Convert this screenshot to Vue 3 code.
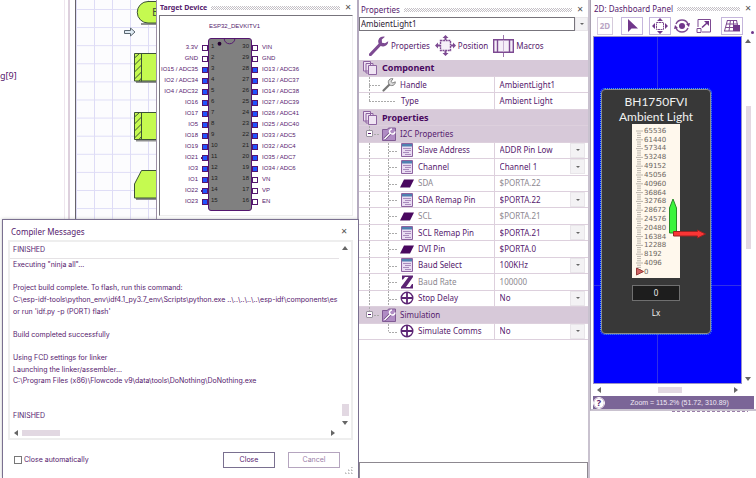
<template>
  <main class="desktop">
    <div class="left-half">
      <section class="explorer">
        <span class="variable">g[9]</span>
      </section>

      <section class="flowchart">
        <svg class="sheet" aria-hidden="true">
          <defs>
            <pattern id="grid" x="18" y="9" width="18" height="18.1" patternUnits="userSpaceOnUse">
              <path d="M0 .5H18M.5 0V18.1" stroke="#dedcf6" fill="none" />
            </pattern>
          </defs>
          <rect width="100%" height="100%" fill="url(#grid)" />
          <g stroke="#8f9090" stroke-width="2" fill="none">
            <path d="M65 24h25M60 82h25M60 140.500h25M60 199h25" />
          </g>
          <g fill="#c5fa50" stroke="#3d5238">
            <path d="M90 1.500H72a10.500 10.500 0 0 0 0 21.500H90z" />
            <path d="M58.500 53.500H90v27.500H58.500zM65.500 53.500v28M58.500 58l5-4.500M58.500 65l7-7M58.500 72l7-7M58.500 79l7-7M63 81l2.500-3" />
            <path d="M58.500 112.500H90v27H58.500zM65.500 112.500v27M58.500 117l5-4.500M58.500 124l7-7M58.500 131l7-7M58.500 138l7-7M63 139.500l2.500-3" />
            <path d="M65.500 170.500H90V198H58.500V184z" />
          </g>
          <path d="M48.500 30.500h6v-2.500l4.500 4-4.500 4v-2.500h-6z" fill="#dfeaf3" stroke="#5a6670" />
          <text x="76" y="16" class="begin">B</text>
        </svg>
      </section>

      <section class="window target">
        <header class="title-bar bold">
          <h2>Target Device</h2><i class="dots"></i>
          <button class="close" aria-label="Close Target Device">✕</button>
        </header>
        <div class="target-view">
          <p class="chip-name">ESP32_DEVKITV1</p>
          <div class="chip">
            <ul class="pins left">
              <li v-for="(pin, i) in leftPins" :key="pin">
                <span>{{ pin }}</span>
                <i class="pad" :class="{ used: i > 1, remapped: i === 10 || i === 13 }"></i>
              </li>
            </ul>
            <div class="chip-body">
              <svg class="notch" viewBox="0 0 44 9"><path d="M16 0a5.500 5 0 0 0 11 0" fill="none" stroke="#54166f" /><circle cx="11" cy="5" r="2" fill="#240030" /></svg>
              <div v-for="n in 15" :key="n" class="numbers"><span>{{ n }}</span><span>{{ 31 - n }}</span></div>
            </div>
            <ul class="pins">
              <li v-for="(pin, i) in rightPins" :key="pin">
                <i class="pad" :class="{ used: i > 1 && i < 12 }"></i>
                <span>{{ pin }}</span>
              </li>
            </ul>
          </div>
        </div>
      </section>

      <section class="dialog">
        <header>
          <h2>Compiler Messages</h2>
          <button class="close" aria-label="Close Compiler Messages">✕</button>
        </header>
        <div class="messages">
          <div class="log-side">
            <p class="status">FINISHED</p>
            <div class="log"><p v-for="(line, i) in log" :key="i">{{ line }}</p></div>
          </div>
          <div class="scroll-v">
            <i class="tri up"></i><i class="track"></i><i class="thumb"></i><i class="tri down"></i>
          </div>
          <div class="scroll-h">
            <i class="tri lft"></i><i class="thumb"></i><i class="track"></i><i class="tri rgt"></i>
          </div>
        </div>
        <footer>
          <label><input v-model="closeAuto" type="checkbox" />Close automatically</label>
          <button class="btn">Close</button>
          <button class="btn" disabled>Cancel</button>
        </footer>
        <svg class="grip" viewBox="0 0 8 8"><path d="M6 0h1v1M3 3h1v1M6 3h1v1M0 6h1v1M3 6h1v1M6 6h1v1" fill="none" stroke="#aaa" /></svg>
      </section>
    </div>

    <section class="window properties">
      <header class="title-bar">
        <h2>Properties</h2><i class="dots"></i>
        <button class="close" aria-label="Close Properties">✕</button>
      </header>
      <div class="combo">
        <select v-model="component" aria-label="Component"><option>AmbientLight1</option></select>
        <span class="drop"><i></i></span>
      </div>
      <nav class="tabs">
        <button>
          <svg width="20" height="20" viewBox="0 0 20 20"><path d="M1.500 18.500 11 8.500" stroke="#7d4a92" stroke-width="3.200" stroke-linecap="round" /><path d="M16 .8a5 5 0 1 0 3.200 4.400L16 7.200 13 6.800 12.800 3.500z" fill="#7d4a92" /></svg>
          Properties
        </button>
        <button>
          <svg width="21" height="21" viewBox="0 0 21 21"><path d="M5.500 5.500h10v10h-10z" fill="#f5eff8" stroke="#7d4a92" stroke-width="1.400" stroke-dasharray="2 .6" /><path d="M10.500 0l3 3h-2v2h-2V3h-2zM10.500 21l3-3h-2v-2h-2v2h-2zM0 10.500l3-3v2h2v2H3v2zM21 10.500l-3-3v2h-2v2h2v2z" fill="#7d4a92" /></svg>
          Position
        </button>
        <button>
          <svg width="21" height="22" viewBox="0 0 21 22"><path d="M10.500 0v22" stroke="#9a75aa" /><path d="M.7 4.700h19.600v12.600H.7z" fill="#f5eff8" stroke="#7d4a92" stroke-width="1.400" /><path d="M4.500 4.500v13M16.500 4.500v13" stroke="#7d4a92" stroke-width="1.400" /><path d="M10.500 5.500v11" stroke="#c9b3d3" /></svg>
          Macros
        </button>
      </nav>
      <table>
        <colgroup><col class="name-col" /><col /></colgroup>
        <tbody>
          <tr v-for="row in rows" :key="row.name + row.kind" :class="[row.kind, { muted: row.muted }]">
            <td class="name" :colspan="row.value ? 1 : 2">
              <div class="cell">
                <i v-if="row.kind === 'group'" class="toggle"></i>
                <svg v-if="row.icon" class="icon" viewBox="0 0 14 14">
                  <g v-if="row.icon === 'pages'" fill="#efe4f3" stroke="#8d63a0">
                    <path d="M.5.500h7v9.500h-7zM3 2.500h7v9.500h-7z" /><path d="M5.500 4.500h8v9h-8z" />
                  </g>
                  <g v-else-if="row.icon === 'wrench'">
                    <path d="M1.500 12.500 8 6" stroke="#777" stroke-width="2.200" stroke-linecap="round" /><path d="M11 .8a3.500 3.500 0 1 0 2.300 3L10.800 5 9 3.500z" fill="#ddd" stroke="#777" stroke-width=".9" />
                  </g>
                  <g v-else-if="row.icon === 'folder'">
                    <path d="M.5 2.500h5l1-1.500h7v12.500H.5z" fill="#b08cc4" stroke="#815b95" /><path d="M2.500 12 9 5.500" stroke="#6a4580" stroke-width="2.800" /><path d="M2.500 12 9 5.500M8 6a2.500 2.500 0 0 1 2-4M9 6.500a2.500 2.500 0 0 0 4-2" stroke="#fff" stroke-width="1.500" fill="none" />
                  </g>
                  <g v-else-if="row.icon === 'list'">
                    <path d="M1.500.500h11v13h-11z" fill="#e9dcf2" stroke="#8d63a0" /><path d="M2 1h10v2.500H2z" fill="#4f80b0" /><path d="M3 5.500h8M5 7.500h6M3 9.500h6M5 11.500h6" stroke="#a98bbd" />
                  </g>
                  <path v-else-if="row.icon === 'pin'" d="M4 3.500h10L10 11.500H0z" fill="#49085f" />
                  <path v-else-if="row.icon === 'z'" d="M2 .5h11v1.500L6 12h4l2-3h1v4.500H1V12L8.500 2H5L3 4.500H2z" fill="#5c2474" />
                  <g v-else fill="none" stroke="#5c2474">
                    <circle cx="7" cy="7" r="5.800" stroke-width="1.400" /><path d="M7 1v12M1 7h12" stroke-width="1.800" />
                  </g>
                </svg>
                <span>{{ row.name }}</span>
              </div>
            </td>
            <td v-if="row.value" class="value">
              <div v-if="row.drop" class="choice">
                <select :aria-label="row.name"><option>{{ row.value }}</option></select>
                <span class="drop"><i></i></span>
              </div>
              <span v-else>{{ row.value }}</span>
            </td>
          </tr>
        </tbody>
      </table>
      <div class="help-box"></div>
    </section>

    <div class="right-column">
      <section class="window dashboard">
        <header class="title-bar">
          <h2>2D: Dashboard Panel</h2><i class="dots"></i>
          <button class="close" aria-label="Close Dashboard Panel">✕</button>
        </header>
        <nav class="tools">
          <button class="two-d">2D</button>
          <button class="on gap" aria-label="Select"><svg viewBox="0 0 16 16"><path d="M4 1v13l3.500-3.500H14z" fill="#70368a" /></svg></button>
          <button class="on" aria-label="Move"><svg viewBox="0 0 16 16"><path d="M4.500 4.500h7v7h-7z" fill="none" stroke="#7d4a92" stroke-dasharray="2 .5" /><path d="M8 0l3 3H5zM8 16l3-3H5zM0 8l3-3v6zM16 8l-3-3v6z" fill="#70368a" /></svg></button>
          <button aria-label="Rotate"><svg viewBox="0 0 16 16"><circle cx="8" cy="8" r="3" fill="#70368a" /><path d="M2 6a6.500 6.500 0 0 1 12 0M14 10a6.500 6.500 0 0 1-12 0" fill="none" stroke="#7d4a92" stroke-width="1.400" /><path d="M16 5l-1 4-3-3zM0 11l1-4 3 3z" fill="#70368a" /></svg></button>
          <button class="gap" aria-label="Scale"><svg viewBox="0 0 16 16"><path d="M2 9V1.500h12.500V14H6" fill="none" stroke="#7d4a92" /><path d="M1 10.500h4v4H1z" fill="#fff" stroke="#7d4a92" /><path d="M6 9.500 11 5" stroke="#70368a" stroke-width="1.500" /><path d="M8 3h5v5z" fill="#70368a" /></svg></button>
          <button class="on" aria-label="Grid"><svg viewBox="0 0 16 16"><path d="M3 2.500h10M2 6h12M1 9.500h14M0 13h16M3.500 2 .5 13M6.500 2 5 13M9.500 2v11M12.500 2l2 11" fill="none" stroke="#7d4a92" /><path d="M9 7h7v6H9z" fill="#70368a" /></svg></button>
          <button class="more" aria-label="More tools"></button>
        </nav>
        <div class="view">
          <div class="canvas">
            <div class="device">
              <h3>BH1750FVI<br />Ambient Light</h3>
              <svg class="gauge" viewBox="0 0 80 154">
                <rect x="16" width="48" height="154" fill="#fff8ed" />
                <path v-for="n in 65" :key="n" :d="`M${n % 4 === 1 ? 20 : 21} ${4.800 + n * 2.200}h${n % 4 === 1 ? 7 : 4}`" stroke="#aaa39b" stroke-width=".8" />
                <text v-for="n in 17" :key="n" x="28" :y="n * 8.820">{{ (17 - n) * 4096 }}</text>
                <path d="M20.500 144v7l7-3.500z" fill="#d06464" stroke="#963b3b" />
                <path d="M53.500 109V84l3.500-9 3.500 9v25z" fill="#3cf53c" stroke="#278a27" />
                <path d="M57.500 107.500h24V106l8 4-8 4v-2h-24z" fill="#fa3535" stroke="#9b2222" />
              </svg>
              <output>0</output>
              <p>Lx</p>
            </div>
          </div>
          <div class="scroll-v">
            <i class="tri up"></i><i class="track"></i><i class="thumb"></i><i class="track low"></i><i class="tri down"></i>
          </div>
          <div class="scroll-h">
            <i class="tri lft"></i><i class="track"></i><i class="thumb"></i><i class="track"></i><i class="tri rgt"></i>
          </div>
        </div>
        <footer class="status-bar">
          <button aria-label="Help">?</button>
          <span>Zoom = 115.2% (51.72, 310.89)</span>
        </footer>
      </section>
      <div class="hidden-edge"></div>
    </div>
  </main>
</template>

<script setup>
import { ref } from 'vue'

const component = ref('AmbientLight1')
const closeAuto = ref(false)

const leftPins = ['3.3V', 'GND', 'IO15 / ADC35', 'IO2 / ADC34', 'IO4 / ADC32', 'IO16', 'IO17', 'IO5', 'IO18', 'IO19', 'IO21', 'IO3', 'IO1', 'IO22', 'IO23']
const rightPins = ['VIN', 'GND', 'IO13 / ADC36', 'IO12 / ADC37', 'IO14 / ADC38', 'IO27 / ADC39', 'IO26 / ADC41', 'IO25 / ADC40', 'IO33 / ADC5', 'IO32 / ADC4', 'IO35 / ADC7', 'IO34 / ADC6', 'VN', 'VP', 'EN']

const log = [
  'Executing "ninja all"...',
  '',
  'Project build complete. To flash, run this command:',
  'C:\\esp-idf-tools\\python_env\\idf4.1_py3.7_env\\Scripts\\python.exe ..\\..\\..\\..\\..\\esp-idf\\components\\es',
  "or run 'idf.py -p (PORT) flash'",
  '',
  'Build completed successfully',
  '',
  'Using FCD settings for linker',
  'Launching the linker/assembler...',
  'C:\\Program Files (x86)\\Flowcode v9\\data\\tools\\DoNothing\\DoNothing.exe',
  '',
  '',
  'FINISHED',
]

const rows = [
  { kind: 'section', icon: 'pages', name: 'Component' },
  { kind: 'top', icon: 'wrench', name: 'Handle', value: 'AmbientLight1' },
  { kind: 'top last', name: 'Type', value: 'Ambient Light' },
  { kind: 'section', icon: 'pages', name: 'Properties' },
  { kind: 'group', icon: 'folder', name: 'I2C Properties' },
  { kind: 'item', icon: 'list', name: 'Slave Address', value: 'ADDR Pin Low', drop: true },
  { kind: 'item', icon: 'list', name: 'Channel', value: 'Channel 1', drop: true },
  { kind: 'item', icon: 'pin', name: 'SDA', value: '$PORTA.22', muted: true },
  { kind: 'item', icon: 'list', name: 'SDA Remap Pin', value: '$PORTA.22', drop: true },
  { kind: 'item', icon: 'pin', name: 'SCL', value: '$PORTA.21', muted: true },
  { kind: 'item', icon: 'list', name: 'SCL Remap Pin', value: '$PORTA.21', drop: true },
  { kind: 'item', icon: 'pin', name: 'DVI Pin', value: '$PORTA.0' },
  { kind: 'item', icon: 'list', name: 'Baud Select', value: '100KHz', drop: true },
  { kind: 'item', icon: 'z', name: 'Baud Rate', value: '100000', muted: true },
  { kind: 'item', icon: 'plus', name: 'Stop Delay', value: 'No', drop: true },
  { kind: 'group', icon: 'folder', name: 'Simulation' },
  { kind: 'item end', icon: 'plus', name: 'Simulate Comms', value: 'No', drop: true },
]
</script>

<style>
body { background: #fff; }
</style>

<style scoped>
* { box-sizing: border-box; }
h2, h3, p, ul { margin: 0; padding: 0; font-weight: 400; }
button, select, input { font: inherit; color: inherit; margin: 0; padding: 0; border: 0; background: none; }
select { appearance: none; min-width: 0; flex: 1; }

.desktop { display: grid; grid-template-columns: minmax(0, 359fr) minmax(0, 231fr) minmax(0, 166fr); min-height: 100vh; color: #55206d; font: 8px/12px "Noto Sans", sans-serif; overflow: hidden; }
.left-half { position: relative; display: grid; grid-template-columns: minmax(0, 76fr) minmax(0, 80fr) minmax(0, 203fr); overflow: hidden; }
.explorer { border-right: 1px solid #66636b; padding: 70px 0 0; font-size: 9px; background: linear-gradient(#ddd0dd, #ddd0dd) right 5px top / 2px 100% no-repeat, linear-gradient(#eee6ee, #eee6ee) right 10px top / 1px 100% no-repeat; }
.flowchart { background: #fcfcfe; overflow: hidden; }
.sheet { display: block; width: 100%; height: 100%; }
.begin { font: 11px "Noto Sans", sans-serif; fill: #3d5238; }

.title-bar { display: flex; align-items: center; gap: 4px; height: 15px; padding: 0 5px 0 3px; }
.title-bar h2 { font-size: 8px; white-space: nowrap; }
.title-bar.bold h2 { font-size: 7px; font-weight: 700; }
.dots { flex: 1; height: 4px; background: repeating-conic-gradient(#c4c0c6 0 25%, #fff 0 50%) 0 0 / 2px 2px; }
.close { width: 8px; height: 12px; font: 8px/12px "DejaVu Sans", sans-serif; color: #555; }
.window { background: #fff; }

.target { border-left: 1px solid #9c90a5; border-right: 2px solid #b5abc0; }
.target-view { margin: 0 4px 0 2px; height: 201px; border: 1px solid #77747c; border-right-color: #eee; border-bottom-color: #eee; }
.chip-name { padding: 4px 0 0 49px; font: 6px/12px "Liberation Sans", sans-serif; }
.chip { display: grid; grid-template-columns: 48fr 44fr 100fr; margin-top: 6px; font: 6px/11px "Liberation Sans", sans-serif; }
.pins { list-style: none; padding: 4px 0; }
.pins li { display: flex; align-items: center; height: 11px; gap: 4px; white-space: nowrap; }
.pins.left li { justify-content: flex-end; }
.pad { flex: none; width: 6px; height: 6px; border: 1px solid #54166f; background: #fff; }
.pad.used { background: #2152ff; }
.pad.remapped { box-shadow: -3px 0 0 -2px #54166f; }
.chip-body { position: relative; padding: 2px 2px; background: #808080; border: 1px solid #54166f; border-radius: 3px; }
.notch { position: absolute; top: 0; left: 0; width: 100%; }
.numbers { display: flex; justify-content: space-between; height: 11px; color: #1d1d1d; }

.dialog { position: absolute; left: 2px; right: 0; top: 219px; bottom: 0; display: flex; flex-direction: column; background: #fff; border: 1px solid #7a7090; border-width: 1px 1px 0; box-shadow: 0 0 3px #8888; font: 7px/12px Inter, sans-serif; }
.dialog header { display: flex; justify-content: space-between; align-items: center; height: 20px; padding: 4px 10px 0 8px; }
.dialog h2 { font: 8px/12px "Noto Sans", sans-serif; }
.messages { flex: 1; min-height: 0; margin: 0 5px; border: 2px solid #eee; display: grid; grid-template: minmax(0, 1fr) 11px / minmax(0, 1fr) 12px; }
.log-side { display: flex; flex-direction: column; min-height: 0; overflow: hidden; }
.status { flex: none; padding: 2px 3px; height: 17px; border-bottom: 1px solid #e5e2e5; }
.log { flex: 1; min-height: 0; display: grid; grid-auto-rows: minmax(0, 1fr); padding: 0 0 5px 3px; }
.log p { min-height: 0; white-space: nowrap; }
.dialog footer { display: flex; align-items: center; gap: 13px; height: 38px; padding: 1px 18px 0 11px; }
.dialog label { flex: 1; display: flex; align-items: center; gap: 2px; }
.dialog input { appearance: none; width: 8px; height: 8px; border: 1px solid #777; }
.dialog input:checked { background: #55206d; }
.btn { width: 52px; height: 16px; border: 1px solid #7a7090; }
.btn:disabled { color: #9a7ea8; border-color: #b5a5bf; }
.grip { position: absolute; right: 5px; bottom: 3px; width: 8px; height: 8px; }

.scroll-v { display: flex; flex-direction: column; align-items: center; padding: 4px 0; }
.scroll-h { display: flex; align-items: center; gap: 4px; padding: 0 4px; }
.track { flex: 1; }
.thumb { background: #e2d8e2; }
.tri { width: 0; height: 0; border: 3px solid transparent; }
.up { border-top: 0; border-bottom: 4px solid #666; }
.down { border-bottom: 0; border-top: 4px solid #666; }
.lft { border-left: 0; border-right: 4px solid #666; }
.rgt { border-right: 0; border-left: 4px solid #666; }
.messages .scroll-v .thumb { width: 7px; height: 12px; margin-bottom: 5px; }
.messages .scroll-v { padding-bottom: 2px; }
.messages .scroll-h .thumb { width: 38px; height: 6px; }

.properties { display: flex; flex-direction: column; border-right: 2px solid #c9c2cf; }
.properties .title-bar { height: 17px; padding: 2px 4px 0 2px; }
.combo, .choice { display: flex; align-items: stretch; }
.combo { height: 14px; color: #2b1a33; }
.combo select { border: 1px solid #77747c; padding-left: 1px; }
.drop { width: 13px; display: flex; align-items: center; justify-content: center; background: #f3f2f4; border: 1px solid #e8e5e9; pointer-events: none; }
.drop i { border: 2px solid transparent; border-top-color: #666; border-bottom: 0; }
.tabs { display: flex; gap: 5px; height: 29px; padding-left: 10px; }
.tabs button { display: flex; align-items: center; gap: 2px; }
table { width: 100%; height: 280px; border-collapse: collapse; table-layout: fixed; }
.name-col { width: 59%; }
td { padding: 0; height: 16px; vertical-align: middle; border-bottom: 1px solid #ddd0dd; line-height: 12px; white-space: nowrap; }
.cell { display: flex; align-items: center; gap: 4px; height: 15px; }
.icon { width: 14px; height: 14px; flex: none; overflow: visible; }
.section td, .group td { background-color: #d7c9d9; }
.section .cell { padding-left: 4px; gap: 5px; font-weight: 700; font-size: 9px; color: #49085f; }
.top .cell { padding-left: 23px; }
.top.last .cell { padding-left: 42px; }
.item .cell { padding-left: 41px; }
.group .cell { padding-left: 7px; }
.toggle { width: 7px; height: 7px; margin-right: 5px; border: 1px solid #9a93a0; border-radius: 1px; background: linear-gradient(#54166f, #54166f) center / 3px 1px no-repeat #fff; }
.top .name, .item .name, .group .name { background-image: repeating-linear-gradient(#aaa 0 2px, transparent 2px 3px), repeating-linear-gradient(#aaa 0 2px, transparent 2px 3px), repeating-linear-gradient(90deg, #aaa 0 2px, transparent 2px 3px); background-repeat: no-repeat; }
.top .name { background-size: 1px 100%, 0 0, 11px 1px; background-position: 10px 0, 0 0, 10px 8px; }
.top.last .name { background-size: 1px 50%, 0 0, 27px 1px; }
.item .name { background-size: 1px 100%, 1px 100%, 9px 1px; background-position: 10px 0, 29px 0, 30px 8px; }
.item.end .name { background-size: 0 0, 1px 50%, 9px 1px; }
.group .name { background-size: 1px 50%, 0 0, 6px 1px; background-position: 10px 0, 0 0, 15px 8px; }
.value { border-left: 1px solid #ddd0dd; padding-left: 5px; }
.choice { height: 15px; padding-right: 3px; }
.choice .drop { width: 15px; }
.muted { color: #8d8890; }
.help-box { margin-top: auto; height: 16px; border: 1px solid #8d8890; border-bottom: 0; }

.dashboard { display: flex; flex-direction: column; height: 411px; border-left: 1px solid #a9a1b0; border-bottom: 2px solid #c9c2cf; padding: 1px 2px 0; overflow: hidden; }
.dashboard .title-bar { height: 16px; padding: 0 2px 0 1px; }
.tools { display: flex; height: 19px; padding: 0 0 1px 4px; }
.tools button { display: grid; place-items: center; flex: none; width: 22px; border: 1px solid transparent; }
.tools .on { border-color: #c5b6dc; }
.tools .two-d { width: 16px; margin-right: 8px; color: #b9a5c4; border-color: #d5cadb; font-weight: 700; }
.tools .gap { margin-right: 6px; }
.tools .more { width: 3px; height: 3px; margin: 14px 0 0 auto; border: 0; border-radius: 50%; background: #70368a; }
.tools svg { width: 16px; height: 16px; }
.view { flex: 1; min-height: 0; display: grid; grid-template: minmax(0, 1fr) 12px / minmax(0, 1fr) 12px; }
.canvas { border: 1px solid #9a93c8; padding: 52px 30px 0 7px; background: linear-gradient(#3030e8, #3030e8) 63px 0 / 1px 100% no-repeat, linear-gradient(#3030e8, #3030e8) 0 248px / 100% 1px no-repeat, #00f; }
.device { display: flex; flex-direction: column; align-items: center; height: 245px; background: #383838; border: 1px solid #8c8c8c; border-radius: 4px; outline: 1px dotted #47a6e8; color: #f1f1f1; }
.device h3 { padding-top: 4px; font: 12px/15px Lato, sans-serif; text-align: center; }
.gauge { width: 80px; height: 154px; overflow: visible; }
.gauge text { font: 7px "DejaVu Sans", sans-serif; fill: #6c6660; }
.device output { width: 48px; height: 16px; margin-top: 7px; border: 1px solid #707070; background: #1d1d1d; text-align: center; line-height: 14px; }
.device p { margin-top: 6px; }
.view .scroll-v { padding: 3px 0; }
.view .scroll-v .track { flex: 62; }
.view .scroll-v .low { flex: 126; }
.view .scroll-v .thumb { flex: 142; width: 5px; }
.view .scroll-h .thumb { width: 24px; height: 6px; }
.view .scroll-h .track:nth-of-type(2) { flex: 56; }
.view .scroll-h .track:nth-of-type(4) { flex: 50; }
.status-bar { display: flex; align-items: center; height: 13px; background: #7b6597; color: #f1eaf5; font: 7px/12px "Liberation Sans", sans-serif; }
.status-bar button { width: 12px; height: 12px; border: 1px solid #55206d; border-radius: 50%; background: #fff; color: #55206d; font: 700 9px/9px "Noto Sans", sans-serif; outline: 1px solid #fff; outline-offset: -1px; }
.status-bar span { flex: 1; text-align: center; }
.hidden-edge { height: 1px; margin: 0 8px 0 82px; background: repeating-linear-gradient(90deg, #9a7ea8 0 3px, #fff 3px 5px); }
</style>
